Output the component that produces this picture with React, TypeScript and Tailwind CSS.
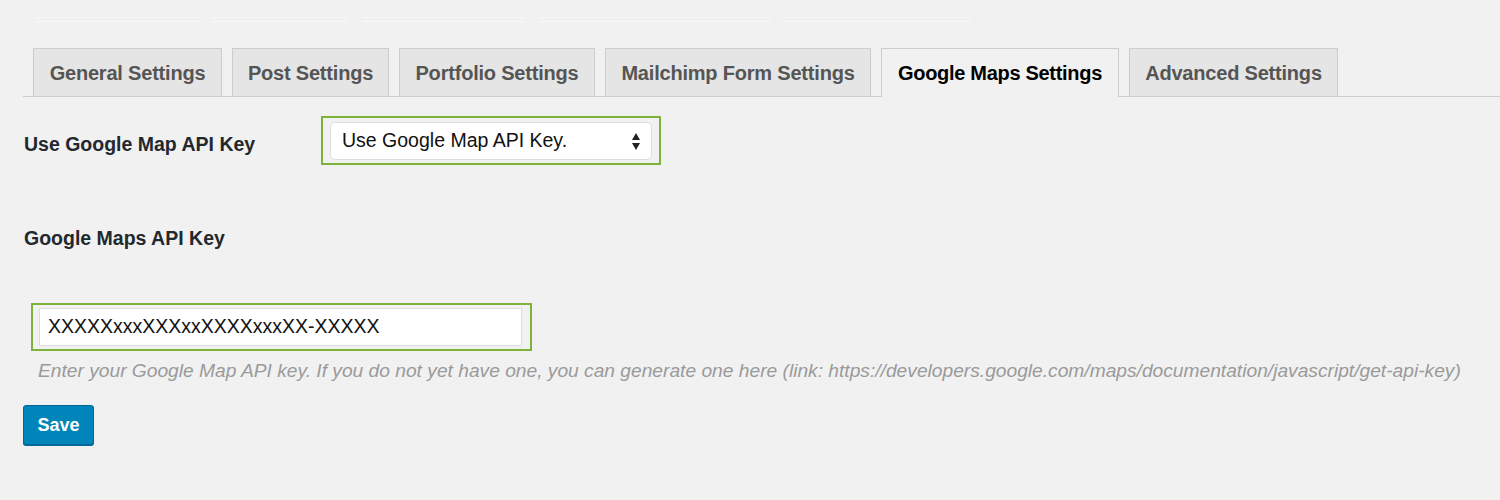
import React from "react";

const tabs = [
  { label: "General Settings", active: false, w: "w-[189px]" },
  { label: "Post Settings", active: false, w: "w-[157px]" },
  { label: "Portfolio Settings", active: false, w: "w-[196px]" },
  { label: "Mailchimp Form Settings", active: false, w: "w-[266px]" },
  { label: "Google Maps Settings", active: true, w: "w-[238px]" },
  { label: "Advanced Settings", active: false, w: "w-[209px]" },
];

export default function App() {
  return (
    <div className="min-h-[500px] bg-[#f1f1f1] pl-[23px] font-['Liberation_Sans',Arial,sans-serif] text-[#23282d]">
      {/* faint remnants of top menu */}
      <div className="flex pt-[17px] pl-[12px]">
        <div className="h-[5px] w-[165px] border-y border-[#f8f8f8]" />
        <div className="ml-[12px] h-[5px] w-[135px] border-y border-[#f8f8f8]" />
        <div className="ml-[15px] h-[5px] w-[163px] border-y border-[#f8f8f8]" />
        <div className="ml-[15px] h-[5px] w-[230px] border-y border-[#f8f8f8]" />
        <div className="ml-[15px] h-[5px] w-[185px] border-y border-[#f8f8f8]" />
      </div>

      {/* tabs */}
      <div className="mt-[26px] flex items-start gap-[10px] border-b border-[#cccccc] pl-[10px]">
        {tabs.map((t) =>
          t.active ? (
            <div
              key={t.label}
              className={`-mb-px flex h-[49px] items-center justify-center whitespace-nowrap border border-b-0 border-[#cccccc] bg-[#f1f1f1] pb-px text-[20px] font-bold tracking-[-0.3px] text-black ${t.w}`}
            >
              {t.label}
            </div>
          ) : (
            <div
              key={t.label}
              className={`flex h-[48px] items-center justify-center whitespace-nowrap border border-b-0 border-[#cccccc] bg-[#e5e5e5] text-[20px] font-bold tracking-[-0.2px] text-[#555555] ${t.w}`}
            >
              {t.label}
            </div>
          )
        )}
      </div>

      {/* row 1 */}
      <div className="mt-[19px] flex items-start">
        <div className="w-[298px] pl-px pt-[16px] text-[19.5px] font-bold leading-[24px]">
          Use Google Map API Key
        </div>
        <div className="border-2 border-[#7fb23a] px-[7px] pt-[4px] pb-[3px]">
          <div className="flex h-[38px] w-[322px] items-center justify-between rounded-[5px] border border-[#dddddd] bg-white pl-[11px] pr-[11px] text-[19.5px] text-[#111]">
            <span>Use Google Map API Key.</span>
            <svg width="8" height="17" viewBox="0 0 8 17" className="mt-px">
              <polygon points="4,0 8,7 0,7" fill="#222" />
              <polygon points="0,10 8,10 4,17" fill="#222" />
            </svg>
          </div>
        </div>
      </div>

      {/* row 2 */}
      <div className="mt-[61px] pl-px text-[19.5px] font-bold leading-[24px]">
        Google Maps API Key
      </div>
      <div className="ml-[8px] mt-[53px] w-[501px] border-2 border-[#7fb23a] pl-[6px] pr-[8px] py-[3px]">
        <div className="flex h-[38px] items-center border border-[#dddddd] bg-white pl-[8px] text-[19.5px] text-[#111]">
          XXXXXxxxXXXxxXXXXxxxXX-XXXXX
        </div>
      </div>
      <div className="ml-[15px] mt-[8px] whitespace-nowrap text-[19.2px] italic leading-[24px] text-[#9a9a9a]">
        Enter your Google Map API key. If you do not yet have one, you can generate one here (link: https://developers.google.com/maps/documentation/javascript/get-api-key)
      </div>
      <div className="mt-[22px]">
        <button className="flex h-[40px] w-[71px] items-center justify-center rounded-[3px] border border-[#006799] bg-[#0085ba] text-[18px] font-bold text-white shadow-[0_1px_0_#006799]">
          Save
        </button>
      </div>
    </div>
  );
}
